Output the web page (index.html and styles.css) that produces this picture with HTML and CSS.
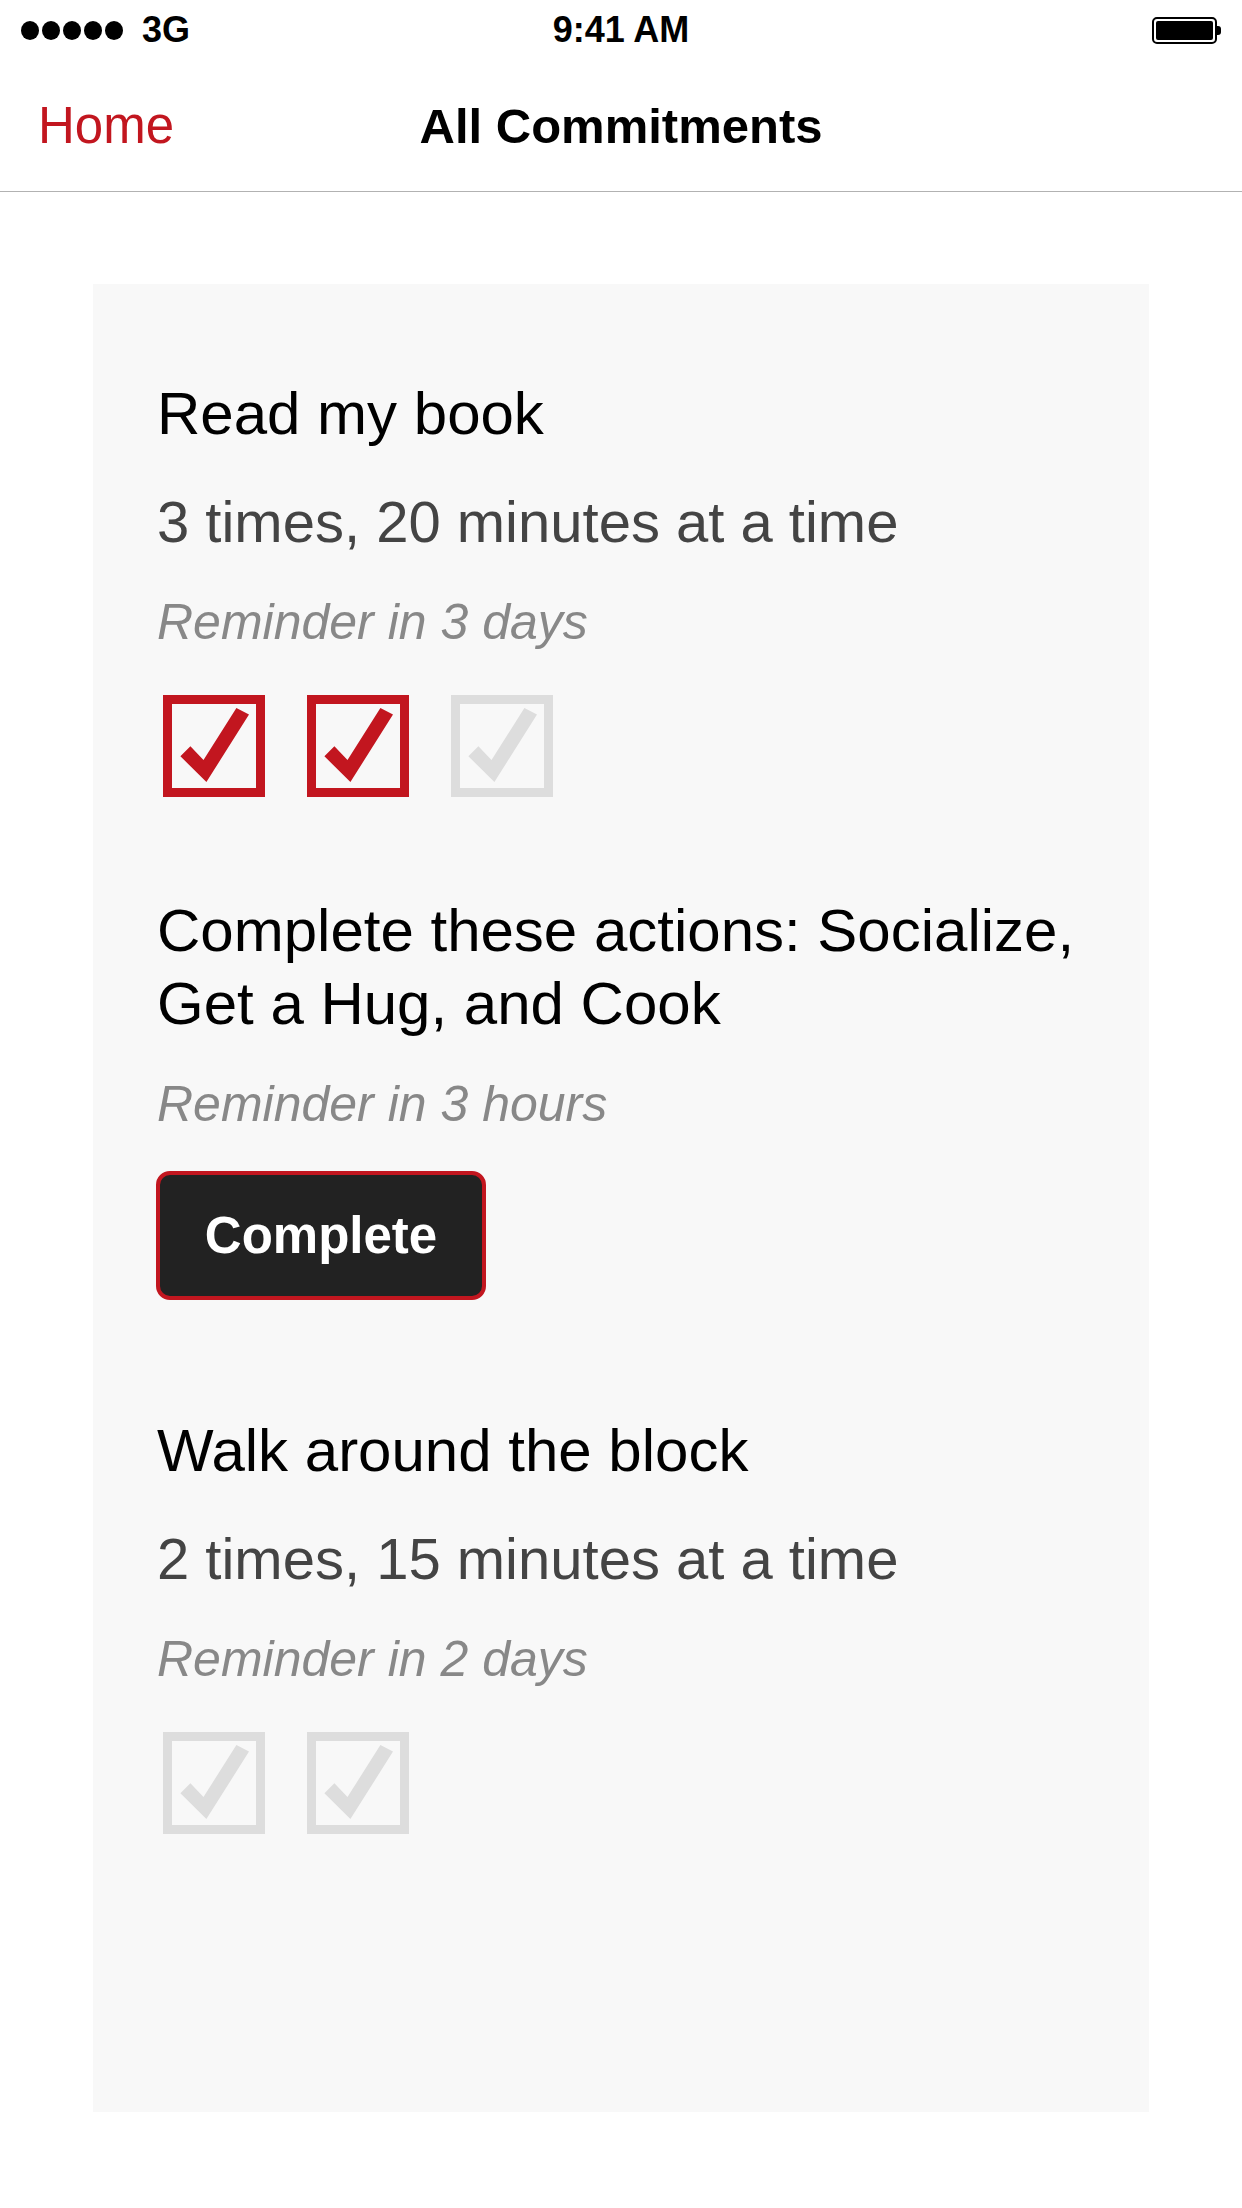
FILE: index.html
```html
<!DOCTYPE html>
<html>
<head>
<meta charset="utf-8">
<link rel="stylesheet" href="styles.css">
</head>
<body>
<div class="screen">
  <div class="status">
    <div class="status-left">
      <span class="dots"><i></i><i></i><i></i><i></i><i></i></span>
      <span class="net">3G</span>
    </div>
    <div class="status-time">9:41 AM</div>
    <div class="status-right">
      <span class="battery"><span class="battery-fill"></span></span><span class="battery-nub"></span>
    </div>
  </div>
  <div class="nav">
    <a class="nav-back">Home</a>
    <div class="nav-title">All Commitments</div>
  </div>
  <div class="content">
    <div class="card">
      <div class="item">
        <div class="title">Read my book</div>
        <div class="detail">3 times, 20 minutes at a time</div>
        <div class="reminder">Reminder in 3 days</div>
        <div class="checks">
          <svg class="check on" viewBox="0 0 102 102"><rect x="4.5" y="4.5" width="93" height="93"/><polygon points="17.4,61.3 43.4,87 86,19.6 73.4,13 40.5,65 27.4,51.3"/></svg>
          <svg class="check on" viewBox="0 0 102 102"><rect x="4.5" y="4.5" width="93" height="93"/><polygon points="17.4,61.3 43.4,87 86,19.6 73.4,13 40.5,65 27.4,51.3"/></svg>
          <svg class="check off" viewBox="0 0 102 102"><rect x="4.5" y="4.5" width="93" height="93"/><polygon points="17.4,61.3 43.4,87 86,19.6 73.4,13 40.5,65 27.4,51.3"/></svg>
        </div>
      </div>
      <div class="item item-action">
        <div class="title">Complete these actions: Socialize, Get a Hug, and Cook</div>
        <div class="reminder">Reminder in 3 hours</div>
        <button class="complete">Complete</button>
      </div>
      <div class="item">
        <div class="title">Walk around the block</div>
        <div class="detail">2 times, 15 minutes at a time</div>
        <div class="reminder">Reminder in 2 days</div>
        <div class="checks">
          <svg class="check off" viewBox="0 0 102 102"><rect x="4.5" y="4.5" width="93" height="93"/><polygon points="17.4,61.3 43.4,87 86,19.6 73.4,13 40.5,65 27.4,51.3"/></svg>
          <svg class="check off" viewBox="0 0 102 102"><rect x="4.5" y="4.5" width="93" height="93"/><polygon points="17.4,61.3 43.4,87 86,19.6 73.4,13 40.5,65 27.4,51.3"/></svg>
        </div>
      </div>
    </div>
  </div>
</div>
</body>
</html>
```
FILE: styles.css
```css
html, body {
  margin: 0;
  padding: 0;
  background: #ffffff;
}
body {
  font-family: "Liberation Sans", Arial, sans-serif;
  color: #000;
}
.screen {
  width: 1242px;
  height: 2208px;
  overflow: hidden;
  background: #fff;
}
.status {
  height: 60px;
  display: flex;
  align-items: center;
  justify-content: space-between;
  padding: 0 21px 0 21px;
  font-size: 36px;
}
.status-left {
  display: flex;
  align-items: center;
  width: 300px;
}
.dots {
  display: flex;
  gap: 3px;
}
.dots i {
  display: block;
  width: 18px;
  height: 19px;
  border-radius: 50%;
  background: #000;
}
.net {
  margin-left: 19px;
  font-weight: 700;
  line-height: 60px;
}
.status-time {
  font-weight: 700;
  line-height: 60px;
  text-align: center;
}
.status-right {
  width: 300px;
  display: flex;
  justify-content: flex-end;
  align-items: center;
}
.battery {
  width: 65px;
  height: 27px;
  border: 2px solid #000;
  border-radius: 5px;
  box-sizing: border-box;
  padding: 2px;
  display: flex;
}
.battery-fill {
  flex: 1;
  background: #000;
  border-radius: 2px;
}
.battery-nub {
  width: 4px;
  height: 9px;
  background: #000;
  border-radius: 0 3px 3px 0;
}
.nav {
  height: 131px;
  border-bottom: 1px solid #b2b2b2;
  display: grid;
  grid-template-columns: 1fr auto 1fr;
  align-items: center;
  padding: 0 38px;
}
.nav-back {
  color: #c2161f;
  font-size: 51px;
  justify-self: start;
}
.nav-title {
  font-size: 49px;
  font-weight: 700;
}
.content {
  padding: 92px 93px 0;
}
.card {
  background: #f8f8f8;
  height: 1828px;
  box-sizing: border-box;
  padding: 93px 40px 0 64px;
}
.item + .item {
  margin-top: 97px;
}
.item-action + .item {
  margin-top: 114px;
}
.title {
  font-size: 60px;
  line-height: 73px;
  color: #000;
}
.detail {
  font-size: 58px;
  line-height: 72px;
  color: #444;
  margin-top: 36px;
}
.reminder {
  font-size: 50px;
  line-height: 60px;
  font-style: italic;
  color: #888;
  margin-top: 34px;
}
.checks {
  display: flex;
  gap: 42px;
  margin-top: 43px;
  padding-left: 6px;
}
.check {
  width: 102px;
  height: 102px;
  display: block;
}
.check rect {
  fill: none;
  stroke-width: 9;
}
.check.on rect { stroke: #c2161f; }
.check.on polygon { fill: #c2161f; }
.check.off rect { stroke: #dddddd; }
.check.off polygon { fill: #dddddd; }
.complete {
  display: block;
  margin-top: 37px;
  margin-left: -1px;
  width: 330px;
  height: 129px;
  box-sizing: border-box;
  background: #222;
  border: 4px solid #c2161f;
  border-radius: 14px;
  color: #fff;
  font-family: "Liberation Sans", Arial, sans-serif;
  font-size: 51px;
  font-weight: 700;
  padding: 0;
}
```
